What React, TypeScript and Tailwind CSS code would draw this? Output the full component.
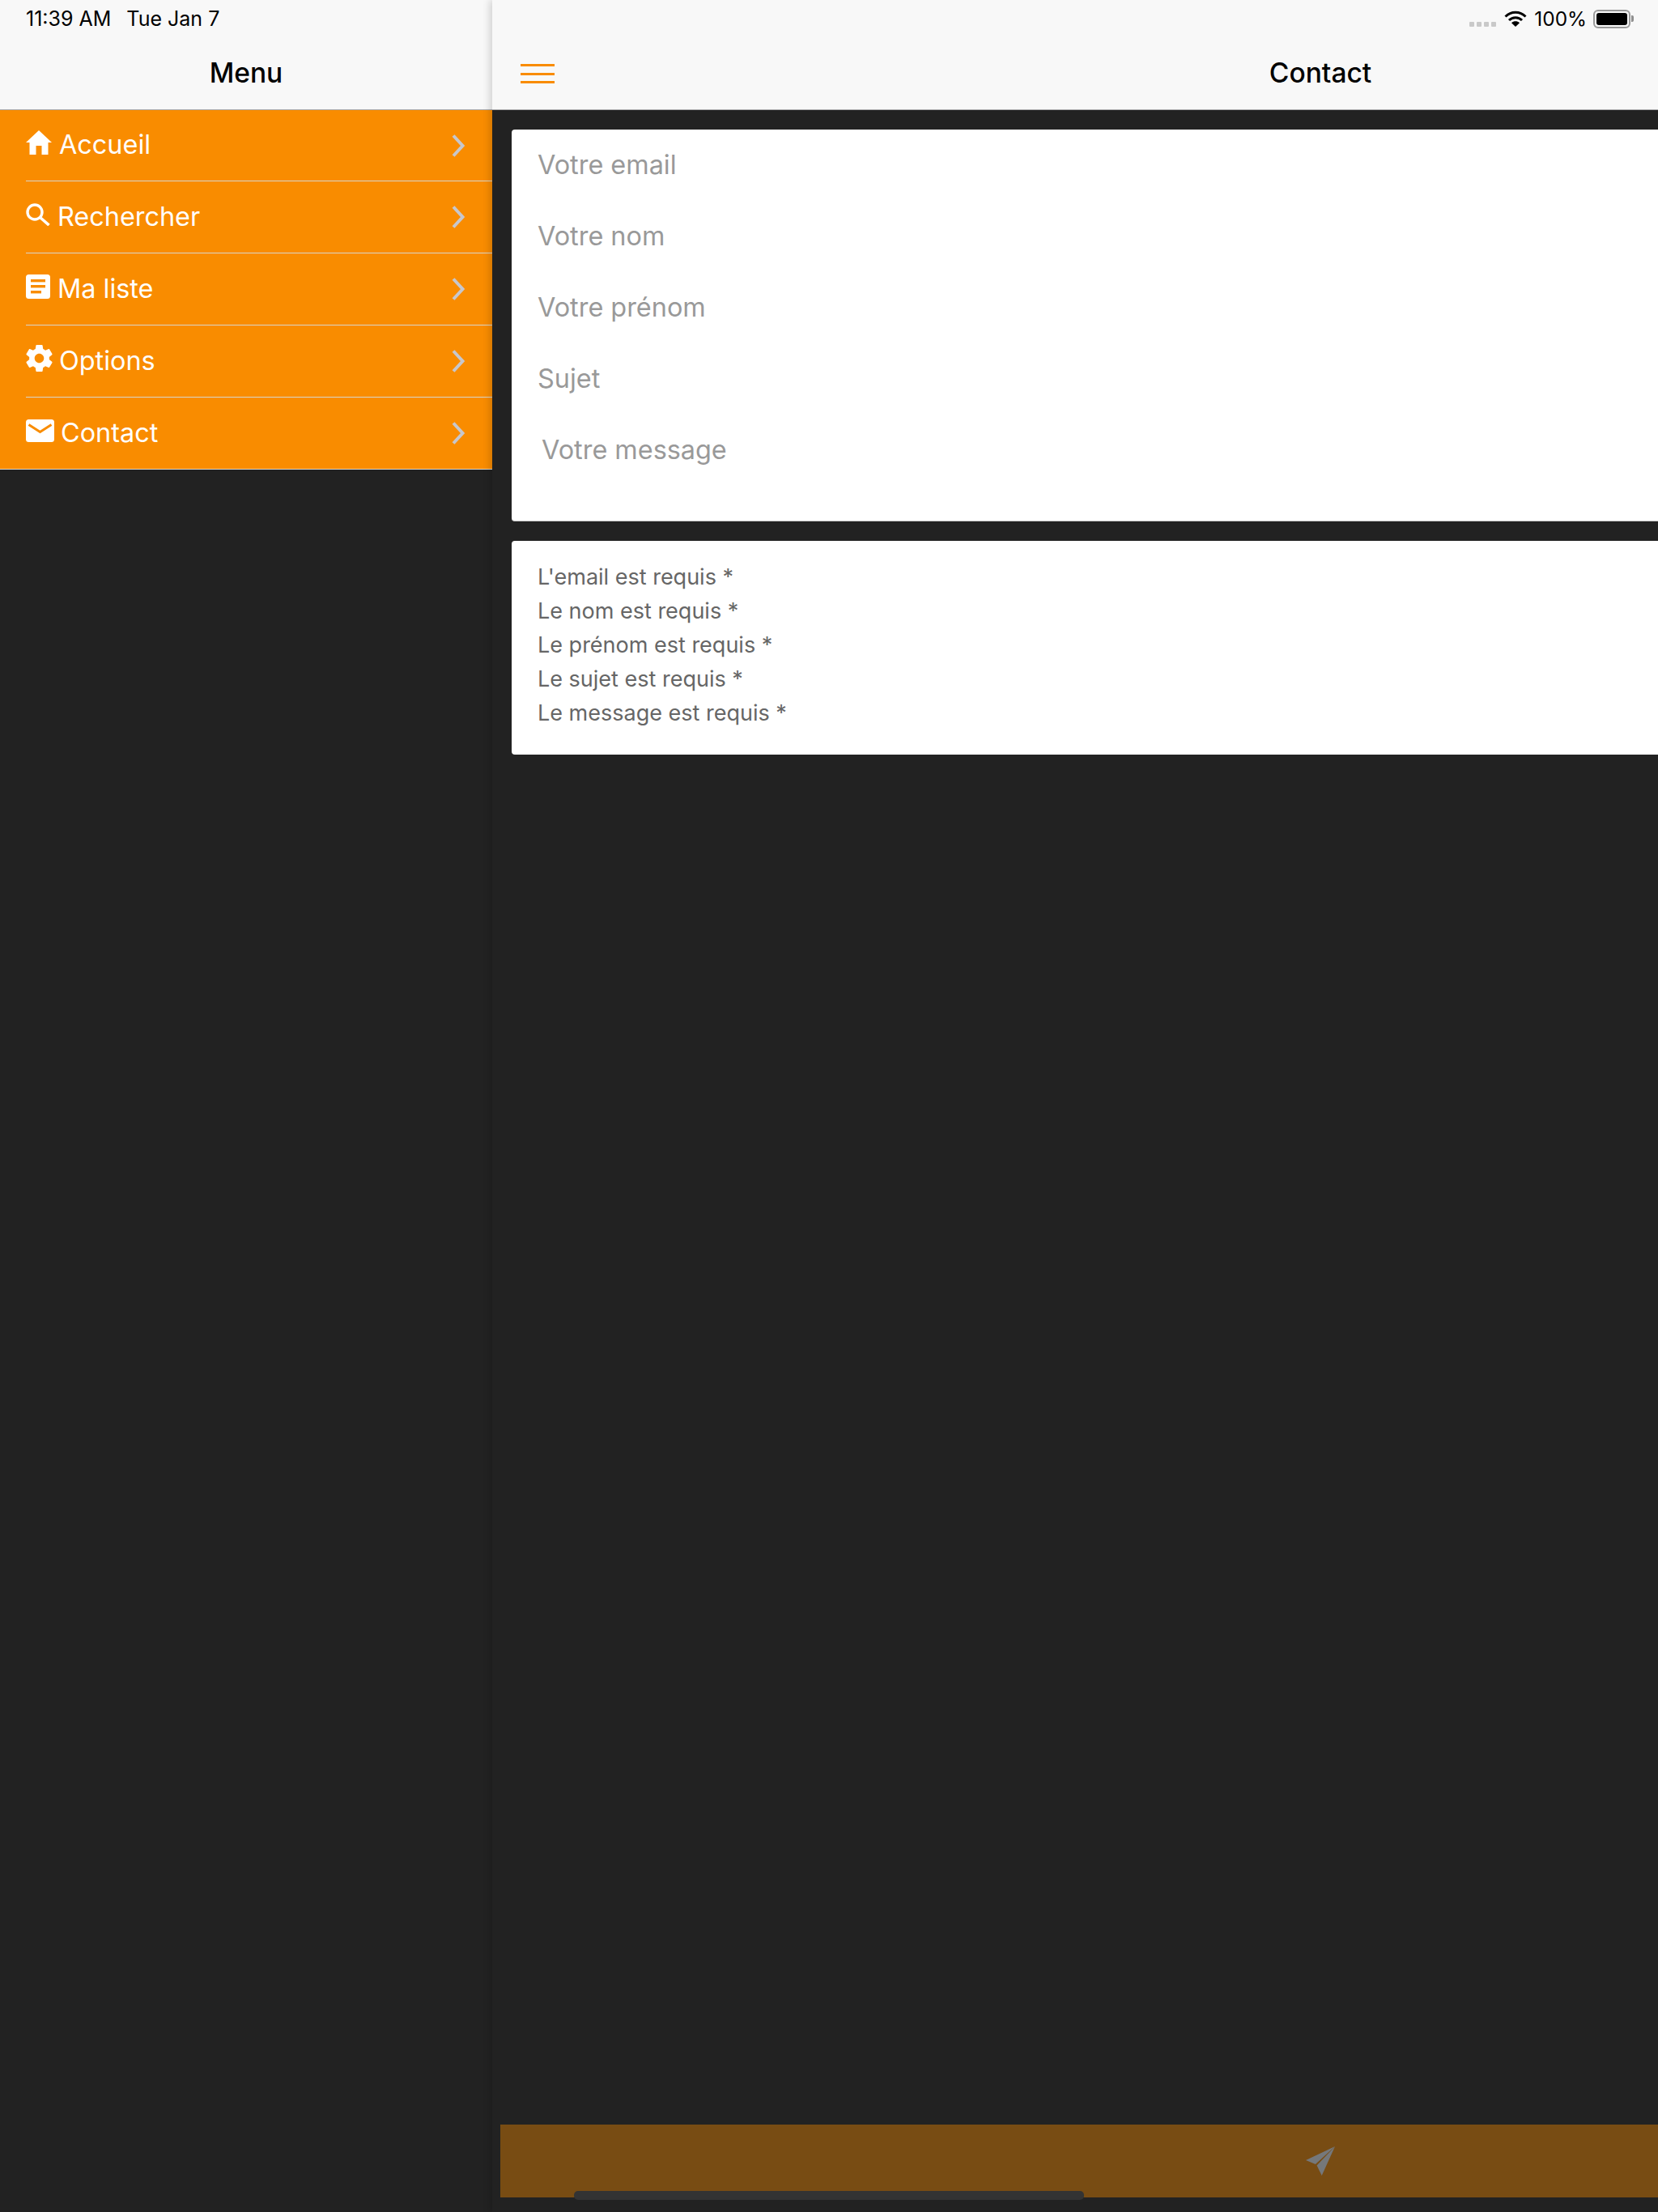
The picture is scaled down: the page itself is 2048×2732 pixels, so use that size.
import React from "react";

function Home() {
  return (
    <svg width="32" height="30" viewBox="0 0 32 30" className="mb-[6px] block shrink-0">
      <path d="M16 0 L32 15 L27.5 15 L27.5 30 L19.5 30 L19.5 19 L12.5 19 L12.5 30 L4.5 30 L4.5 15 L0 15 Z" fill="#fff" />
    </svg>
  );
}
function SearchI() {
  return (
    <svg width="30" height="28" viewBox="0 0 30 28" className="mb-[6px] block shrink-0">
      <circle cx="11" cy="11" r="9" fill="none" stroke="#fff" strokeWidth="3.4" />
      <path d="M17.5 17.5 L28.5 27" stroke="#fff" strokeWidth="3.6" fill="none" />
    </svg>
  );
}
function ListI() {
  return (
    <svg width="30" height="30" viewBox="0 0 30 30" className="mb-[6px] block shrink-0">
      <rect width="30" height="30" rx="3.5" fill="#fff" />
      <rect x="6" y="6" width="18" height="3.4" fill="#f98c00" />
      <rect x="6" y="13" width="18" height="3.4" fill="#f98c00" />
      <rect x="6" y="20" width="13" height="3.4" fill="#f98c00" />
    </svg>
  );
}
function Gear() {
  return (
    <svg width="33" height="33" viewBox="2.3 2 19.4 20" className="mb-[6px] block shrink-0">
      <path
        fillRule="evenodd"
        fill="#fff"
        d="M19.43 12.98c.04-.32.07-.64.07-.98s-.03-.66-.07-.98l2.11-1.65c.19-.15.24-.42.12-.64l-2-3.46c-.12-.22-.39-.3-.61-.22l-2.49 1c-.52-.4-1.08-.73-1.69-.98l-.38-2.65C14.46 2.18 14.25 2 14 2h-4c-.25 0-.46.18-.49.42l-.38 2.65c-.61.25-1.17.59-1.69.98l-2.49-1c-.23-.09-.49 0-.61.22l-2 3.46c-.13.22-.07.49.12.64l2.11 1.65c-.04.32-.07.65-.07.98s.03.66.07.98l-2.11 1.65c-.19.15-.24.42-.12.64l2 3.46c.12.22.39.3.61.22l2.49-1c.52.4 1.08.73 1.69.98l.38 2.65c.03.24.24.42.49.42h4c.25 0 .46-.18.49-.42l.38-2.65c.61-.25 1.17-.59 1.69-.98l2.49 1c.23.09.49 0 .61-.22l2-3.46c.12-.22.07-.49-.12-.64l-2.11-1.65zM12 15.5c-1.93 0-3.5-1.57-3.5-3.5s1.57-3.5 3.5-3.5 3.5 1.57 3.5 3.5-1.57 3.5-3.5 3.5z"
      />
    </svg>
  );
}
function Mail() {
  return (
    <svg width="35" height="28" viewBox="0 0 35 28" className="mb-[6px] block shrink-0">
      <rect width="35" height="28" rx="3.5" fill="#fff" />
      <path d="M3.5 6.5 L17.5 15.5 L31.5 6.5" fill="none" stroke="#f98c00" strokeWidth="3" />
    </svg>
  );
}
function Chevron() {
  return (
    <svg width="16" height="28" viewBox="0 0 16 28" className="block">
      <path d="M2 1.5 L13.5 14 L2 26.5" fill="none" stroke="#c7c7cc" strokeWidth="4" />
    </svg>
  );
}
function Wifi() {
  return (
    <svg width="28" height="20" viewBox="0 0 28 20" className="block">
      <path d="M1.5 7.5 C8.5 0.5 19.5 0.5 26.5 7.5" fill="none" stroke="#000" strokeWidth="3" />
      <path d="M6 12 C10.5 7.5 17.5 7.5 22 12" fill="none" stroke="#000" strokeWidth="3" />
      <path d="M14 20 L9 15.2 C12 12.6 16 12.6 19 15.2 Z" fill="#000" />
    </svg>
  );
}
function Send() {
  return (
    <svg width="36" height="36" viewBox="70 62 106 106" className="block">
      <path d="M176 62 L70 112 L105 127 Z" fill="#75787b" />
      <path d="M176 62 L110 131 L128 168 Z" fill="#75787b" />
    </svg>
  );
}

const rows = [
  { label: "Accueil", icon: <Home />, gap: "ml-[9px]", text: "h-[87px]" },
  { label: "Rechercher", icon: <SearchI />, gap: "ml-[9px]", text: "h-[88px]" },
  { label: "Ma liste", icon: <ListI />, gap: "ml-[9px]", text: "h-[88px]" },
  { label: "Options", icon: <Gear />, gap: "ml-[8px]", text: "h-[88px]" },
  { label: "Contact", icon: <Mail />, gap: "ml-[8px]", text: "h-[88px]" },
];

const fields = ["Votre email", "Votre nom", "Votre prénom", "Sujet"];
const errors = [
  "L'email est requis *",
  "Le nom est requis *",
  "Le prénom est requis *",
  "Le sujet est requis *",
  "Le message est requis *",
];

export default function App() {
  return (
    <div className="relative flex h-[2732px] w-[2048px] overflow-hidden bg-[#222222] font-['Inter',sans-serif]">
      <aside className="flex w-[608px] shrink-0 flex-col">
        <header className="h-[136px] border-b border-[#a9a9ab] bg-[#f8f8f8]">
          <div className="flex h-[46px] items-center pl-[32px] pt-[2px] text-[25px] text-black">
            <span>11:39 AM</span>
            <span className="ml-[19px]">Tue Jan 7</span>
          </div>
          <div className="flex h-[89px] items-center justify-center text-[33.5px] font-medium text-black">Menu</div>
        </header>
        <nav className="bg-[#f98c00]">
          {rows.map((r, i) => (
            <div key={r.label} className={i === 4 ? "border-b border-[#d9d5cc]" : "pl-[32px]"}>
              <div
                className={`flex ${r.text} items-center pr-[34px] ${i === 4 ? "pl-[32px]" : "box-content border-b border-[#d9d5cc]"}`}
              >
                <div className="flex flex-1 items-center">
                  {r.icon}
                  <span className={`${r.gap} text-[32.4px] text-white`}>{r.label}</span>
                </div>
                <Chevron />
              </div>
            </div>
          ))}
        </nav>
      </aside>

      <main className="relative z-10 flex min-w-0 flex-1 flex-col shadow-[-3px_0_9px_rgba(0,0,0,0.16)]">
        <header className="h-[136px] shrink-0 border-b border-[#a9a9ab] bg-[#f8f8f8]">
          <div className="flex h-[46px] items-center justify-end pr-[30px]">
            <div className="mt-[14px] flex gap-[3px]">
              <span className="h-[6px] w-[6px] rounded-[1px] bg-[#c9c9c9]" />
              <span className="h-[6px] w-[6px] rounded-[1px] bg-[#c9c9c9]" />
              <span className="h-[6px] w-[6px] rounded-[1px] bg-[#c9c9c9]" />
              <span className="h-[6px] w-[6px] rounded-[1px] bg-[#c9c9c9]" />
            </div>
            <div className="ml-[10px]">
              <Wifi />
            </div>
            <span className="ml-[9px] mt-[1px] text-[24.4px] text-black">100%</span>
            <div className="ml-[8px] flex items-center">
              <div className="h-[23px] w-[46px] rounded-[6px] border-2 border-[#9a9a9a] p-[2px]">
                <div className="h-full w-full rounded-[3px] bg-black" />
              </div>
              <div className="ml-[1px] h-[8px] w-[3px] rounded-r-[2px] bg-[#8e8e8e]" />
            </div>
          </div>
          <div className="relative flex h-[89px] items-center justify-center pl-[606px] text-[33.5px] font-medium text-black">
            <div className="absolute left-[35px] top-[33px] flex h-[24px] w-[42px] flex-col justify-between">
              <span className="h-[3px] bg-[#f98c00]" />
              <span className="h-[3px] bg-[#f98c00]" />
              <span className="h-[3px] bg-[#f98c00]" />
            </div>
            <span>Contact</span>
          </div>
        </header>

        <div className="flex min-h-0 flex-1 flex-col pl-[24px] pt-[24px]">
          <section className="h-[484px] rounded-l-[4px] border-b border-[#c4c4c4] bg-white">
            {fields.map((f) => (
              <div key={f} className="flex h-[88px] items-center pl-[32px] text-[32.4px] text-[#999999]">
                {f}
              </div>
            ))}
            <div className="flex h-[88px] items-center pl-[37px] text-[32.4px] text-[#999999]">Votre message</div>
          </section>
          <section className="mt-[24px] h-[264px] rounded-l-[4px] bg-white pl-[32px] pt-[24px]">
            {errors.map((e) => (
              <div key={e} className="h-[42px] text-[27px] leading-[42px] text-[#666666]">
                {e}
              </div>
            ))}
          </section>
        </div>

        <div className="mb-[18px] ml-[10px] flex h-[90px] shrink-0 items-center bg-[#784c13] pl-[995px]">
          <Send />
        </div>
        <div className="absolute bottom-[15px] left-[101px] h-[11px] w-[630px] rounded-[5px] bg-[#333333]" />
      </main>
    </div>
  );
}
